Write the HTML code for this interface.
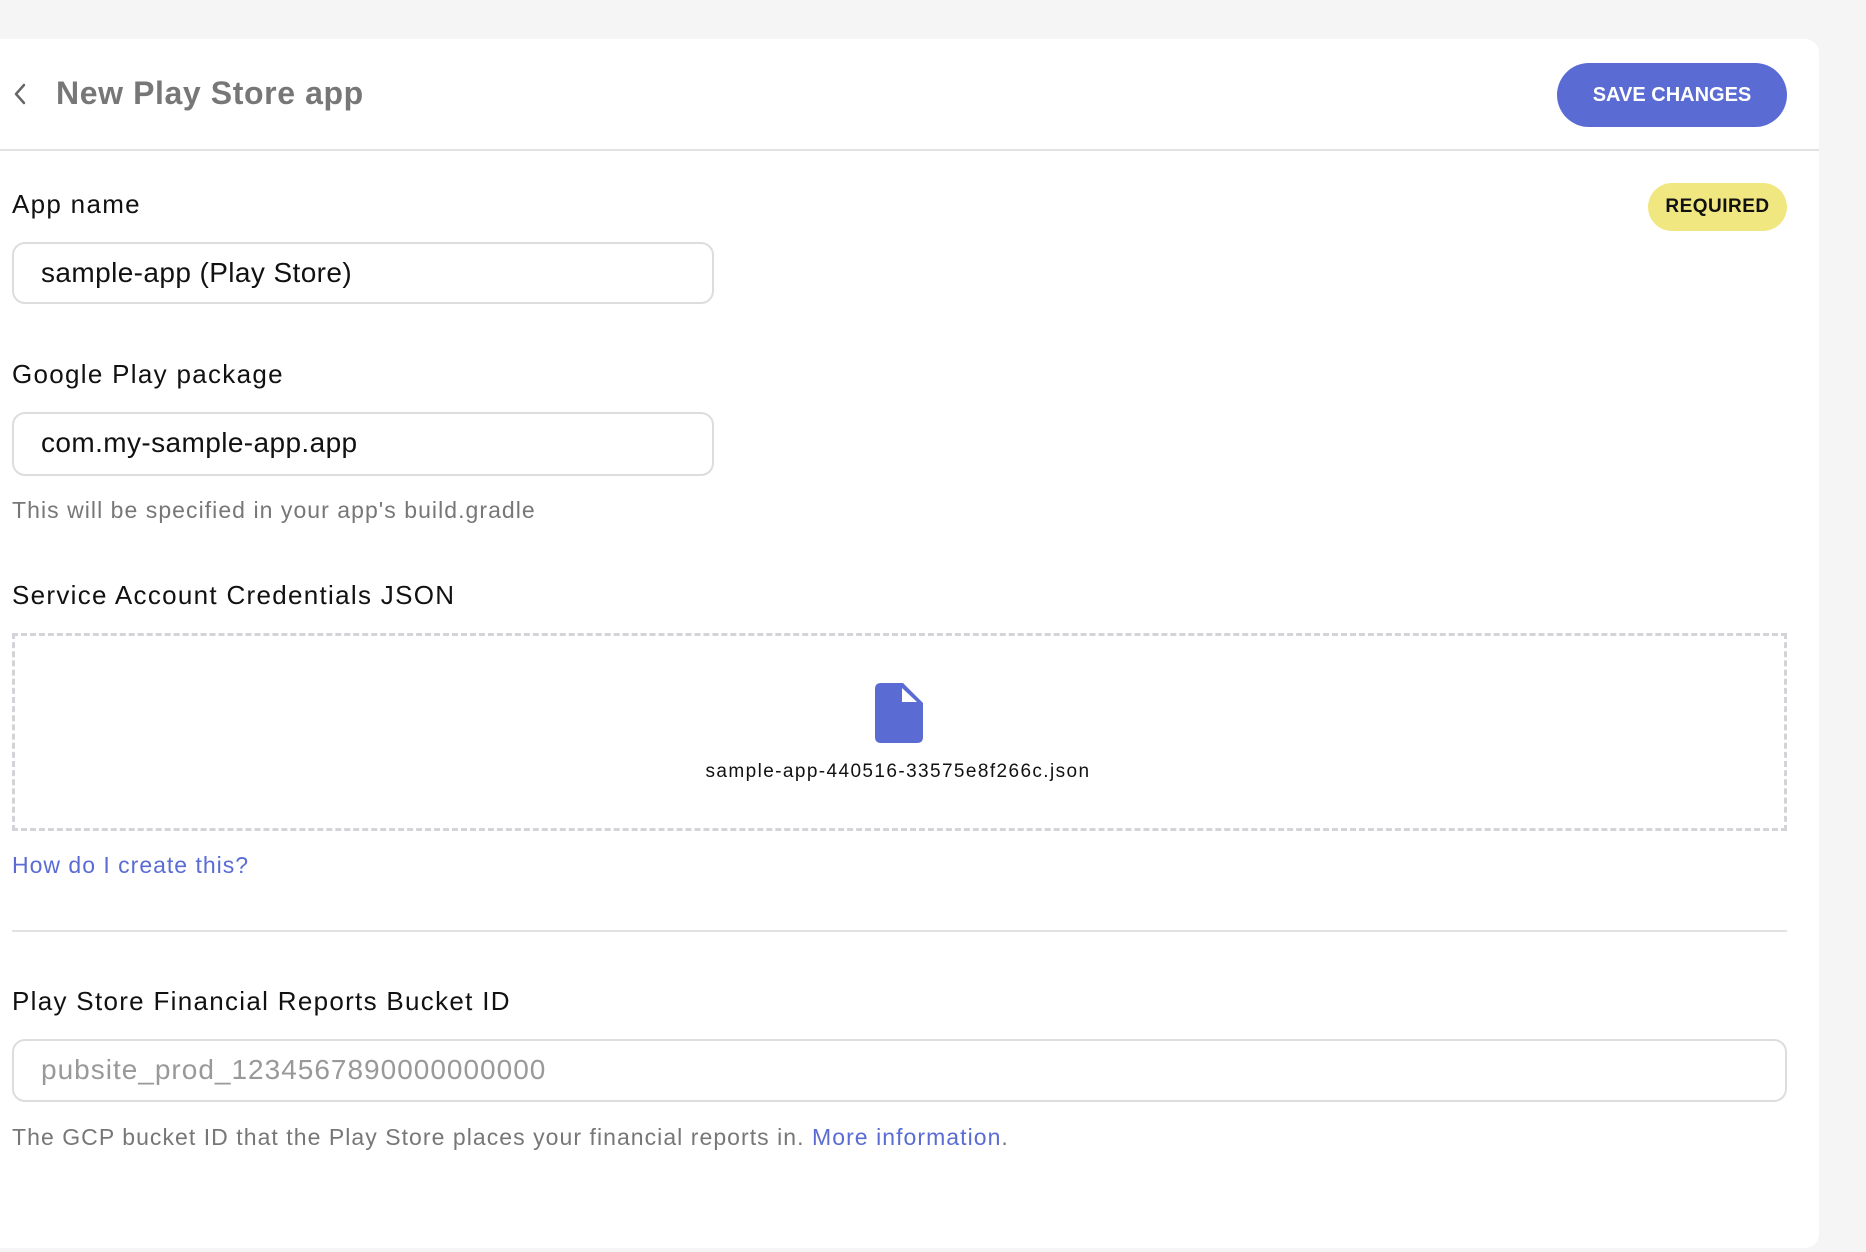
<!DOCTYPE html>
<html><head><meta charset="utf-8"><style>
*{box-sizing:border-box;margin:0;padding:0}
body{width:1866px;height:1252px;background:#f5f5f5;font-family:"Liberation Sans",sans-serif;position:relative;overflow:hidden;color:#111}
.card{position:absolute;left:0;top:39px;width:1819px;height:1209px;background:#fff;border-radius:0 14px 14px 0}
.a{position:absolute;white-space:nowrap}
.lbl{font-size:26px;color:#111;line-height:30px;letter-spacing:1.3px}
.inp{position:absolute;border:2px solid #ddd;border-radius:13px;font-size:28px;line-height:57px;padding-left:27px;color:#111;letter-spacing:0.4px}
.help{font-size:23px;color:#777;line-height:28px;letter-spacing:1.05px}
</style></head><body>
<div class="card"></div>
<svg class="a" style="left:12px;top:82px" width="16" height="24" viewBox="0 0 16 24"><path d="M12 3 L4 12 L12 21" stroke="#666" stroke-width="2.5" fill="none" stroke-linecap="round" stroke-linejoin="round"/></svg>
<div class="a" style="left:56px;top:74px;font-size:32px;line-height:38px;color:#777;font-weight:bold;letter-spacing:0.6px">New Play Store app</div>
<div class="a" style="left:1557px;top:63px;width:230px;height:64px;border-radius:32px;background:#5a6cd3;color:#fff;font-weight:bold;font-size:20px;line-height:64px;text-align:center">SAVE CHANGES</div>
<div class="a" style="left:0;top:149px;width:1819px;height:2px;background:#e2e2e2"></div>

<div class="a lbl" style="left:12px;top:189px">App name</div>
<div class="a" style="left:1648px;top:183px;width:139px;height:48px;border-radius:24px;background:#f1e781;font-weight:bold;font-size:19px;line-height:48px;text-align:center;letter-spacing:0.5px;color:#111">REQUIRED</div>
<div class="inp" style="left:12px;top:242px;width:702px;height:62px">sample-app (Play Store)</div>

<div class="a lbl" style="left:12px;top:359px">Google Play package</div>
<div class="inp" style="left:12px;top:412px;width:702px;height:64px">com.my-sample-app.app</div>
<div class="a help" style="left:12px;top:496px">This will be specified in your app's build.gradle</div>

<div class="a lbl" style="left:12px;top:580px">Service Account Credentials JSON</div>
<div class="a" style="left:12px;top:633px;width:1775px;height:198px;border:3px dashed #d3d4d8"></div>
<svg class="a" style="left:875px;top:683px" width="48" height="60" viewBox="0 0 48 60"><path d="M6 0 H28 L48 20 V54 Q48 60 42 60 H6 Q0 60 0 54 V6 Q0 0 6 0Z" fill="#5a6cd3"/><path d="M27 5 V19 H42Z" fill="#fff"/></svg>
<div class="a" style="left:598px;top:760px;width:600px;text-align:center;font-size:19px;line-height:24px;color:#111;letter-spacing:1.4px">sample-app-440516-33575e8f266c.json</div>
<div class="a" style="left:12px;top:851px;font-size:23px;line-height:28px;color:#5a6cd3;letter-spacing:1px">How do I create this?</div>
<div class="a" style="left:12px;top:930px;width:1775px;height:2px;background:#e2e2e2"></div>

<div class="a lbl" style="left:12px;top:986px">Play Store Financial Reports Bucket ID</div>
<div class="inp" style="left:12px;top:1039px;width:1775px;height:63px;color:#999;letter-spacing:1px">pubsite_prod_1234567890000000000</div>
<div class="a help" style="left:12px;top:1123px">The GCP bucket ID that the Play Store places your financial reports in. <span style="color:#5a6cd3">More information</span>.</div>
</body></html>
